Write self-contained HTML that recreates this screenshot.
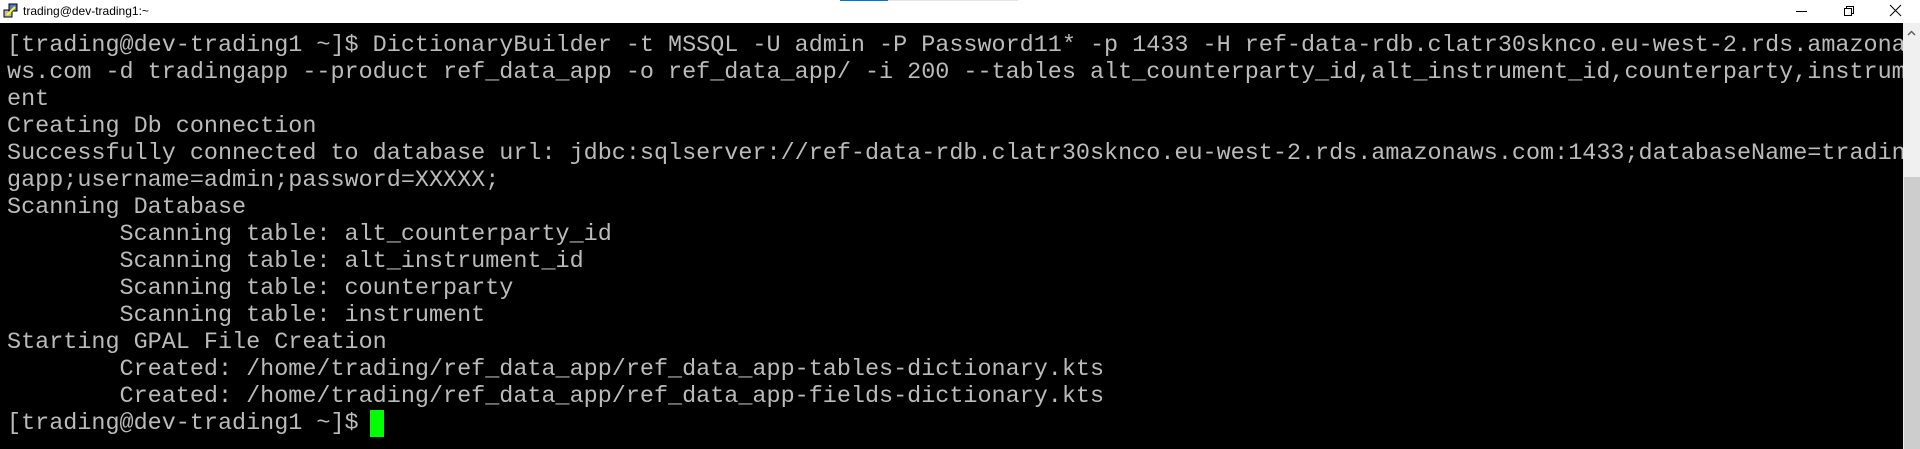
<!DOCTYPE html>
<html><head><meta charset="utf-8"><style>
html,body{margin:0;padding:0;width:1920px;height:449px;overflow:hidden;background:#000}
#title{position:absolute;left:0;top:0;width:1920px;height:23px;background:#fff}
#title .t{position:absolute;left:23px;top:4px;font:12px "Liberation Sans",sans-serif;color:#000}
#term{position:absolute;left:0;top:23px;width:1903px;height:426px;background:#000}
pre{position:absolute;left:7px;top:9px;margin:0;font-family:"Courier New","Nimbus Mono PS","Nimbus Mono L","FreeMono","Courier","Liberation Mono",monospace;font-size:23.45px;line-height:27px;color:#bbbbbb;white-space:pre}
#cur{position:absolute;left:370px;top:410px;width:14px;height:27px;background:#00ff00}
#sb{position:absolute;left:1903px;top:23px;width:17px;height:426px;background:#f0f0f0}
#thumb{position:absolute;left:1904px;top:177px;width:16px;height:272px;background:#cdcdcd}
</style></head><body>
<div id="title">
<div style="position:absolute;left:840px;top:0;width:48px;height:1px;background:#0078d7"></div>
<div style="position:absolute;left:888px;top:0;width:130px;height:1px;background:#e5e5e5"></div>
<svg style="position:absolute;left:3px;top:3px" width="16" height="16" viewBox="0 0 16 16"><rect x="1" y="7" width="8" height="7" fill="#bbb" stroke="#000"/><rect x="6" y="1" width="8" height="7" fill="#5577cc" stroke="#000"/><path d="M4 12 L12 4" stroke="#ff0" stroke-width="2"/></svg>
<span class="t">trading@dev-trading1:~</span>
<svg style="position:absolute;left:1795px;top:4px" width="15" height="15"><path d="M1 7.5H12" stroke="#000"/></svg>
<svg style="position:absolute;left:1843px;top:4px" width="15" height="15"><path d="M1.5 4.5h7v7h-7z M3.5 4.5V2.5h7v7h-2" fill="none" stroke="#000"/></svg>
<svg style="position:absolute;left:1889px;top:4px" width="15" height="15"><path d="M1 1L12 12M12 1L1 12" stroke="#000"/></svg>
</div>
<div id="term">
<pre>[trading@dev-trading1 ~]$ DictionaryBuilder -t MSSQL -U admin -P Password11* -p 1433 -H ref-data-rdb.clatr30sknco.eu-west-2.rds.amazona
ws.com -d tradingapp --product ref_data_app -o ref_data_app/ -i 200 --tables alt_counterparty_id,alt_instrument_id,counterparty,instrum
ent
Creating Db connection
Successfully connected to database url: jdbc:sqlserver://ref-data-rdb.clatr30sknco.eu-west-2.rds.amazonaws.com:1433;databaseName=tradin
gapp;username=admin;password=XXXXX;
Scanning Database
        Scanning table: alt_counterparty_id
        Scanning table: alt_instrument_id
        Scanning table: counterparty
        Scanning table: instrument
Starting GPAL File Creation
        Created: /home/trading/ref_data_app/ref_data_app-tables-dictionary.kts
        Created: /home/trading/ref_data_app/ref_data_app-fields-dictionary.kts
[trading@dev-trading1 ~]$ </pre>
</div>
<div id="cur"></div>
<div id="sb"><svg style="position:absolute;left:4px;top:7px" width="9" height="6"><path d="M1 5L4.5 1.5L8 5" fill="none" stroke="#606060" stroke-width="1.5"/></svg></div>
<div id="thumb"></div>
</body></html>
